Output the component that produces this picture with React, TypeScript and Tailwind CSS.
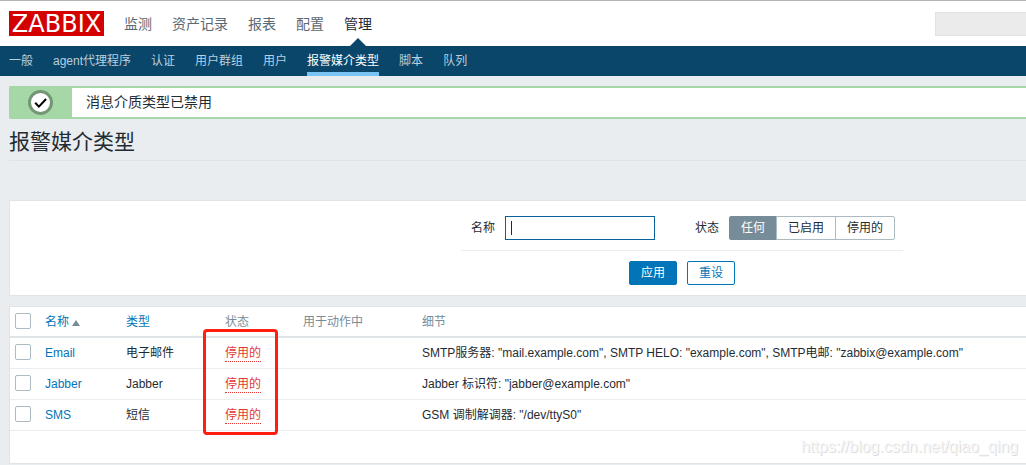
import { ReactNode } from "react";
import clsx from "clsx";

const menu = ["监测", "资产记录", "报表", "配置", "管理"];

const subMenu = [
  "一般",
  "agent代理程序",
  "认证",
  "用户群组",
  "用户",
  "报警媒介类型",
  "脚本",
  "队列",
];

const mediaTypes = [
  {
    name: "Email",
    type: "电子邮件",
    details:
      'SMTP服务器: "mail.example.com", SMTP HELO: "example.com", SMTP电邮: "zabbix@example.com"',
  },
  { name: "Jabber", type: "Jabber", details: 'Jabber 标识符: "jabber@example.com"' },
  { name: "SMS", type: "短信", details: 'GSM 调制解调器: "/dev/ttyS0"' },
];

function Header() {
  return (
    <header className="flex h-[46px] items-center border-t border-[#b4b4b0] bg-white pl-[9px]">
      <a
        href="#"
        className="flex h-[25px] w-[95px] items-center justify-center bg-[#d40000] font-['DejaVu_Sans',sans-serif] text-2xl leading-6 text-white"
      >
        ZABBIX
      </a>
      <nav className="ml-5 flex gap-5 self-stretch text-sm">
        {menu.map((item) => {
          const active = item === "管理";
          return (
            <a
              key={item}
              href="#"
              className={clsx(
                "relative flex items-center",
                active ? "text-[#1f2c33]" : "text-[#586975]"
              )}
            >
              {item}
              {active && (
                <svg
                  className="absolute bottom-0 left-1/2 -translate-x-1/2"
                  width="16"
                  height="8"
                  viewBox="0 0 16 8"
                >
                  <path d="M0 8L8 0l8 8z" fill="#0a466a" />
                </svg>
              )}
            </a>
          );
        })}
      </nav>
      <input
        type="search"
        aria-label="搜索"
        className="ml-auto h-6 w-[91px] border border-r-0 border-[#e2e2e2] bg-[#ebebeb] px-2 outline-none"
      />
    </header>
  );
}

function SubMenu() {
  return (
    <nav className="flex h-[30px] gap-5 bg-[#0a466a] pl-[9px] leading-[30px]">
      {subMenu.map((item) => (
        <a
          key={item}
          href="#"
          className={clsx(
            "whitespace-nowrap",
            item === "报警媒介类型"
              ? "border-b-4 border-[#7ac3f5] text-white"
              : "text-[#b8d0df]"
          )}
        >
          {item}
        </a>
      ))}
    </nav>
  );
}

function Message({ children }: { children: ReactNode }) {
  return (
    <div
      role="status"
      className="flex h-[33px] rounded-l-xs border-y-2 border-[#a5d7a7] bg-white"
    >
      <div className="-my-0.5 flex w-[63px] items-center justify-center rounded-l-xs bg-[#a5d7a7]">
        <svg width="25" height="25" viewBox="0 0 25 25" fill="none">
          <circle cx="12.5" cy="12.5" r="11" fill="#fff" stroke="#739675" strokeWidth="3" />
          <path d="M7.2 12.8l3.7 3.8 7.2-7.6" stroke="#000" strokeWidth="2" />
        </svg>
      </div>
      <p className="pl-3.5 text-sm leading-[29px]">{children}</p>
    </div>
  );
}

function StatusOption({ label, checked }: { label: string; checked?: boolean }) {
  return (
    <label className="-ml-px border border-[#acbbc2] px-[11px] leading-[22px] first:ml-0 first:rounded-l-xs last:rounded-r-xs has-checked:border-[#768d99] has-checked:bg-[#768d99] has-checked:text-white">
      <input
        type="radio"
        name="status"
        defaultChecked={checked}
        className="sr-only"
      />
      {label}
    </label>
  );
}

function Filter() {
  return (
    <form className="flex border border-r-0 border-[#dfe4e7] bg-white pt-[15px] pb-2.5 pl-[451px]">
      <div className="w-[442px]">
        <div className="flex items-center border-b border-[#ebeef0] pb-2.5 pl-2.5">
          <label htmlFor="name">名称</label>
          <div className="relative ml-2.5">
            <input
              id="name"
              type="text"
              autoFocus
              className="block h-6 w-[150px] border border-[#0a639b] px-[5px] caret-transparent outline-none"
            />
            <span className="absolute top-[5px] left-1.5 h-3.5 w-px bg-[#1f2c33]" />
          </div>
          <fieldset className="ml-10 flex items-center">
            <legend className="float-left mr-2.5">状态</legend>
            <div className="flex">
              <StatusOption label="任何" checked />
              <StatusOption label="已启用" />
              <StatusOption label="停用的" />
            </div>
          </fieldset>
        </div>
        <div className="flex justify-center gap-2.5 pt-2.5">
          <button
            type="button"
            className="h-6 w-12 rounded-xs border border-[#0275b8] bg-[#0275b8] text-white"
          >
            应用
          </button>
          <button
            type="reset"
            className="h-6 w-12 rounded-xs border border-[#0275b8] bg-white text-[#0275b8]"
          >
            重设
          </button>
        </div>
      </div>
    </form>
  );
}

function CheckBox({ label }: { label: string }) {
  return (
    <input
      type="checkbox"
      aria-label={label}
      className="mb-0.5 ml-[5px] block size-4 appearance-none rounded-xs border border-[#acbbc2] bg-white"
    />
  );
}

function MediaTable() {
  return (
    <div className="relative border border-r-0 border-[#dfe4e7] bg-white pb-8">
      <table className="w-full table-fixed border-separate border-spacing-0 text-left whitespace-nowrap">
        <colgroup>
          <col className="w-[35px]" />
          <col className="w-[81px]" />
          <col className="w-[99px]" />
          <col className="w-[78px]" />
          <col className="w-[119px]" />
          <col />
        </colgroup>
        <thead className="text-[#768d99]">
          <tr className="h-[31px] *:border-b-2 *:border-[#dfe4e7] *:font-normal">
            <th>
              <CheckBox label="全选" />
            </th>
            <th>
              <a href="#" className="flex items-center gap-[3px] text-[#0275b8]">
                名称
                <svg className="mt-0.5" width="8" height="6" viewBox="0 0 8 6">
                  <path d="M0 6l4-6 4 6z" fill="#768d99" />
                </svg>
              </a>
            </th>
            <th>
              <a href="#" className="text-[#0275b8]">
                类型
              </a>
            </th>
            <th>状态</th>
            <th>用于动作中</th>
            <th>细节</th>
          </tr>
        </thead>
        <tbody>
          {mediaTypes.map((media) => (
            <tr key={media.name} className="h-[31px] *:border-b *:border-[#ebeef0]">
              <td>
                <CheckBox label={media.name} />
              </td>
              <td>
                <a href="#" className="text-[#0275b8]">
                  {media.name}
                </a>
              </td>
              <td>{media.type}</td>
              <td>
                <a
                  href="#"
                  className="inline-block border-b border-dotted border-[#e33734] leading-[15px] text-[#e33734]"
                >
                  停用的
                </a>
              </td>
              <td />
              <td>{media.details}</td>
            </tr>
          ))}
        </tbody>
      </table>
      {/* highlight around the status column */}
      <div className="pointer-events-none absolute top-[22px] left-[193px] h-[106px] w-[75px] rounded-sm border-3 border-[#ff1f10]" />
      <span className="absolute right-2 bottom-1.5 font-['Liberation_Sans',sans-serif] text-base leading-5 text-[#f8f8f8] [text-shadow:1px_1px_0_#ddd]">
        https://blog.csdn.net/qiao_qing
      </span>
    </div>
  );
}

export default function App() {
  return (
    <div className="min-h-screen overflow-hidden bg-[#e9edf0] font-['Liberation_Sans','Noto_Sans_CJK_SC',sans-serif] text-xs text-[#1f2c33]">
      <Header />
      <SubMenu />
      <main className="pt-2.5 pl-[9px]">
        <Message>消息介质类型已禁用</Message>
        <h1 className="mb-[39px] border-b border-[#dfe4e7] pt-[9px] pb-1 text-[21px] leading-7">
          报警媒介类型
        </h1>
        <Filter />
        <div className="mt-2.5">
          <MediaTable />
        </div>
      </main>
    </div>
  );
}
